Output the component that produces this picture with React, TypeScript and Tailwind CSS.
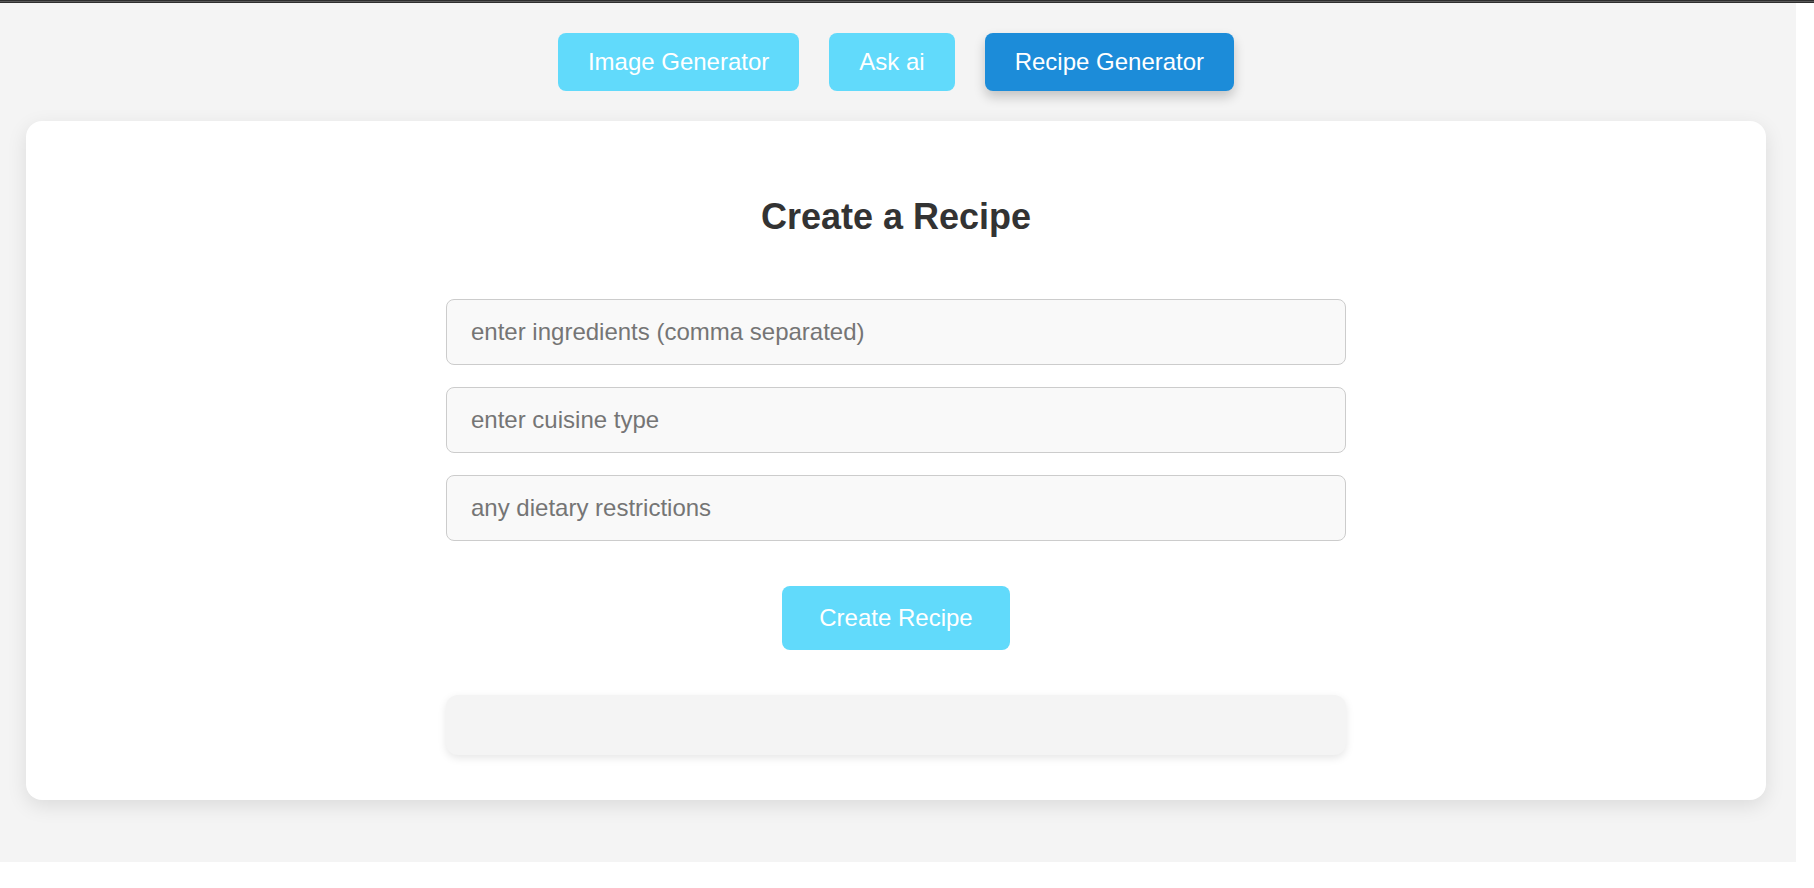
import { useState } from "react";

const TABS = ["Image Generator", "Ask ai", "Recipe Generator"];

export default function App() {
  const [active, setActive] = useState("Recipe Generator");
  const [ingredients, setIngredients] = useState("");
  const [cuisine, setCuisine] = useState("");
  const [diet, setDiet] = useState("");

  return (
    <div className="min-h-screen bg-white font-['Liberation_Sans',Arial,sans-serif]">
      <div className="h-[3px] border-y border-[#2e2e2e] bg-[#5a5a5a]" />
      <div className="h-[859px] w-[1796px] bg-[#f4f4f4] pt-[30px]">
        <nav className="flex justify-center gap-[30px] pr-[4px]">
          {TABS.map((tab) => (
            <button
              key={tab}
              type="button"
              onClick={() => setActive(tab)}
              className={
                tab === active
                  ? "rounded-[8px] bg-[#1c8cd9] px-[30px] py-[15px] text-[24px] leading-[1.15] text-white shadow-[0_6px_12px_rgba(0,0,0,0.2)]"
                  : "rounded-[8px] bg-[#61dafb] px-[30px] py-[15px] text-[24px] leading-[1.15] text-white"
              }
            >
              {tab}
            </button>
          ))}
        </nav>

        <main className="ml-[26px] mt-[30px] w-[1740px] rounded-[16px] bg-white p-[45px] shadow-[0_6px_20px_rgba(0,0,0,0.1)]">
          <h2 className="mt-[30px] text-center text-[36px] font-bold leading-[1.15] text-[#333]">
            Create a Recipe
          </h2>

          <form
            className="mx-auto mt-[62px] flex w-[900px] flex-col items-center"
            onSubmit={(e) => e.preventDefault()}
          >
            <div className="flex w-full flex-col gap-[22px]">
              <input
                value={ingredients}
                onChange={(e) => setIngredients(e.target.value)}
                placeholder="enter ingredients (comma separated)"
                className="h-[66px] w-full rounded-[8px] border border-[#ccc] bg-[#f9f9f9] px-[24px] text-[24px] text-[#333] outline-none placeholder:text-[#757575]"
              />
              <input
                value={cuisine}
                onChange={(e) => setCuisine(e.target.value)}
                placeholder="enter cuisine type"
                className="h-[66px] w-full rounded-[8px] border border-[#ccc] bg-[#f9f9f9] px-[24px] text-[24px] text-[#333] outline-none placeholder:text-[#757575]"
              />
              <input
                value={diet}
                onChange={(e) => setDiet(e.target.value)}
                placeholder="any dietary restrictions"
                className="h-[66px] w-full rounded-[8px] border border-[#ccc] bg-[#f9f9f9] px-[24px] text-[24px] text-[#333] outline-none placeholder:text-[#757575]"
              />
            </div>

            <button
              type="submit"
              className="mt-[45px] rounded-[8px] bg-[#61dafb] px-[37px] py-[18px] text-[24px] leading-[1.15] text-white"
            >
              Create Recipe
            </button>

            <div className="mt-[45px] h-[60px] w-full rounded-[12px] bg-[#f4f4f4] shadow-[0_3px_8px_rgba(0,0,0,0.1)]" />
          </form>
        </main>
      </div>
    </div>
  );
}
